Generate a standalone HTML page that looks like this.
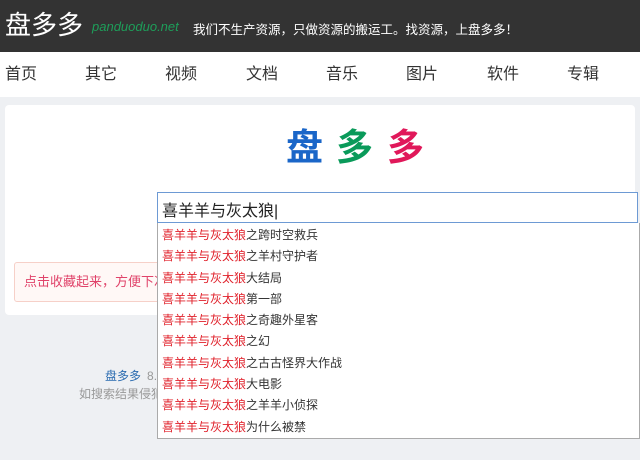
<!DOCTYPE html>
<html><head><meta charset="utf-8"><style>
*{margin:0;padding:0;box-sizing:border-box}
body{width:640px;height:460px;overflow:hidden;background:#eef0f3;font-family:"Liberation Sans","Noto Sans CJK SC",sans-serif;position:relative}
.hd{position:absolute;left:0;top:0;width:640px;height:52px;background:#333}
.hd .t{position:absolute;left:5px;top:9px;color:#fff;font-size:26px;line-height:32px}
.hd .u{position:absolute;left:92px;top:19px;color:#1e9e5a;font-size:13px;font-style:italic}
.hd .s{position:absolute;left:193px;top:19px;color:#fff;font-size:12.5px}
.nav{position:absolute;left:0;top:52px;width:640px;height:45px;background:#fff}
.nav span{position:absolute;top:8px;font-size:16px;color:#333}
.card{position:absolute;left:5px;top:105px;width:630px;height:210px;background:#fff;border-radius:4px}
.logo{position:absolute;top:126px;font-size:37px;font-weight:bold;line-height:44px}
.tip{position:absolute;left:14px;top:262px;width:300px;height:40px;border:1px solid #f6d0c8;background:#fff8f6;border-radius:3px;color:#e0436a;font-size:13px;padding:8px 9px}
.in{position:absolute;left:157px;top:192px;width:481px;height:31px;border:1px solid #6d9ad4;background:#fff;font-size:16px;padding:4px 4px;color:#222}
.dd{position:absolute;left:157px;top:223px;width:483px;height:216px;border:1px solid #aaa;border-top:none;background:#fff;padding-top:2px}
.dd div{height:21.3px;font-size:12px;line-height:21px;padding-left:4px;color:#333}
.dd b{font-weight:normal;color:#e0202a}
.f1{position:absolute;left:105px;top:367px;font-size:12px;color:#2a6bb0}
.f1 i{font-style:normal;color:#999;margin-left:6px}
.f2{position:absolute;left:79px;top:385px;font-size:12px;color:#999}
</style></head><body>
<div class="hd"><span class="t">盘多多</span><span class="u">panduoduo.net</span><span class="s">我们不生产资源，只做资源的搬运工。找资源，上盘多多！</span></div>
<div class="nav"><span style="left:5px">首页</span><span style="left:85px">其它</span><span style="left:165px">视频</span><span style="left:246px">文档</span><span style="left:326px">音乐</span><span style="left:406px">图片</span><span style="left:487px">软件</span><span style="left:567px">专辑</span></div>
<div class="card"></div>
<span class="logo" style="left:286px;color:#1a66c8">盘</span>
<span class="logo" style="left:336px;color:#0a9a5a">多</span>
<span class="logo" style="left:387px;color:#e0185a">多</span>
<div class="tip">点击收藏起来，方便下次再来</div>
<div class="f1">盘多多<i>8.</i></div>
<div class="f2">如搜索结果侵犯</div>
<div class="in">喜羊羊与灰太狼|</div>
<div class="dd">
<div><b>喜羊羊与灰太狼</b>之跨时空救兵</div>
<div><b>喜羊羊与灰太狼</b>之羊村守护者</div>
<div><b>喜羊羊与灰太狼</b>大结局</div>
<div><b>喜羊羊与灰太狼</b>第一部</div>
<div><b>喜羊羊与灰太狼</b>之奇趣外星客</div>
<div><b>喜羊羊与灰太狼</b>之幻</div>
<div><b>喜羊羊与灰太狼</b>之古古怪界大作战</div>
<div><b>喜羊羊与灰太狼</b>大电影</div>
<div><b>喜羊羊与灰太狼</b>之羊羊小侦探</div>
<div><b>喜羊羊与灰太狼</b>为什么被禁</div>
</div>
</body></html>
